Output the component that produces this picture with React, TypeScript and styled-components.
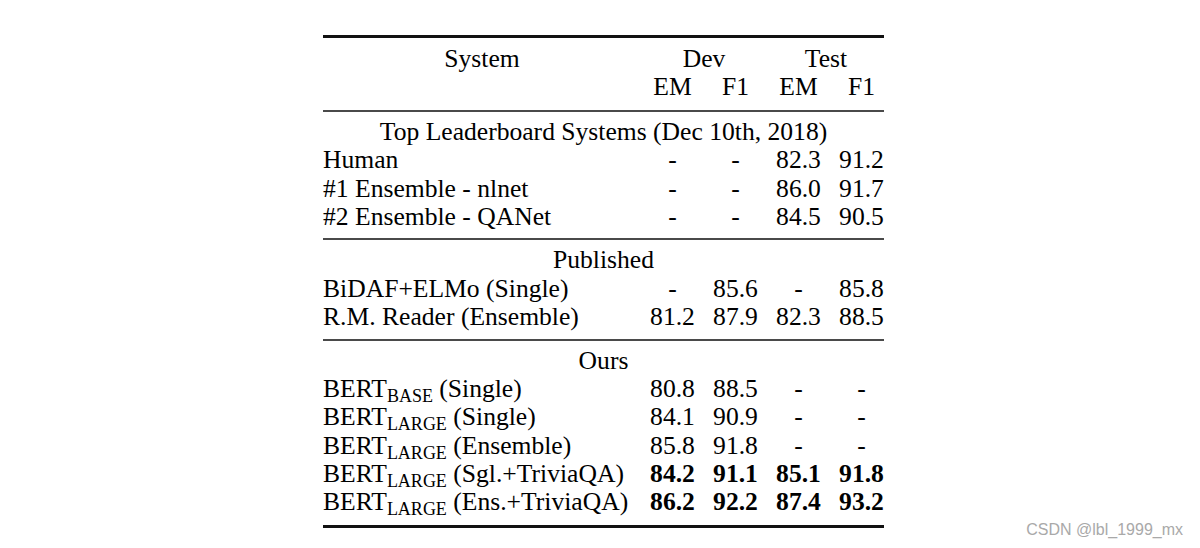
import React from "react";
import styled, { createGlobalStyle } from "styled-components";

const Global = createGlobalStyle`
  html, body { margin: 0; padding: 0; background: #fff; }
  body { width: 1200px; height: 548px; overflow: hidden; }
`;

const Page = styled.div`
  position: relative;
  width: 1200px;
  height: 548px;
  padding: 35px 0 0 323px;
  box-sizing: border-box;
  background: #fff;
  font-family: "Liberation Serif", "Times New Roman", serif;
  color: #000;
`;

const Table = styled.div`
  width: 561px;
  display: flex;
  flex-direction: column;
`;

const Rule = styled.div<{ $heavy?: boolean }>`
  height: ${(p) => (p.$heavy ? "3px" : "2px")};
  background: ${(p) => (p.$heavy ? "#111" : "#4a4a4a")};
`;

const Section = styled.div<{ $top?: number; $bottom?: number }>`
  padding: ${(p) => p.$top ?? 6}px 0 ${(p) => p.$bottom ?? 7}px;
  display: flex;
  flex-direction: column;
`;

const Row = styled.div`
  display: grid;
  grid-template-columns: 1fr repeat(4, 45px);
  column-gap: 18px;
  font-size: 25.6px;
  line-height: 28.4px;
  height: 28.4px;
  white-space: nowrap;
`;

const Label = styled.div<{ $center?: boolean }>`
  text-align: ${(p) => (p.$center ? "center" : "left")};
  padding-left: ${(p) => (p.$center ? "9px" : "0")};
`;

const Cell = styled.div<{ $bold?: boolean; $span?: number; $nudge?: number }>`
  font-weight: ${(p) => (p.$bold ? 700 : 400)};
  grid-column: span ${(p) => p.$span ?? 1};
  display: flex;
  justify-content: center;
  padding-right: ${(p) => p.$nudge ?? 0}px;
  overflow: visible;
`;

const Title = styled.div`
  grid-column: 1 / -1;
  text-align: center;
`;

const Sub = styled.span`
  font-size: 18px;
  text-transform: uppercase;
  vertical-align: -5px;
  line-height: 0;
`;

const Mark = styled.div`
  position: absolute;
  right: 17px;
  bottom: 9px;
  font-family: "Liberation Sans", Arial, sans-serif;
  font-size: 16px;
  color: #a9a9a9;
`;

type Data = { name: React.ReactNode; v: string[]; bold?: boolean };

const Bert = ({ sub, rest }: { sub: string; rest: string }) => (
  <>
    BERT<Sub>{sub}</Sub> {rest}
  </>
);

const leaderboard: Data[] = [
  { name: "Human", v: ["-", "-", "82.3", "91.2"] },
  { name: "#1 Ensemble - nlnet", v: ["-", "-", "86.0", "91.7"] },
  { name: "#2 Ensemble - QANet", v: ["-", "-", "84.5", "90.5"] },
];

const published: Data[] = [
  { name: "BiDAF+ELMo (Single)", v: ["-", "85.6", "-", "85.8"] },
  { name: "R.M. Reader (Ensemble)", v: ["81.2", "87.9", "82.3", "88.5"] },
];

const ours: Data[] = [
  { name: <Bert sub="base" rest="(Single)" />, v: ["80.8", "88.5", "-", "-"] },
  { name: <Bert sub="large" rest="(Single)" />, v: ["84.1", "90.9", "-", "-"] },
  { name: <Bert sub="large" rest="(Ensemble)" />, v: ["85.8", "91.8", "-", "-"] },
  { name: <Bert sub="large" rest="(Sgl.+TriviaQA)" />, v: ["84.2", "91.1", "85.1", "91.8"], bold: true },
  { name: <Bert sub="large" rest="(Ens.+TriviaQA)" />, v: ["86.2", "92.2", "87.4", "93.2"], bold: true },
];

const DataRows = ({ rows }: { rows: Data[] }) => (
  <>
    {rows.map((r, i) => (
      <Row key={i}>
        <Label>{r.name}</Label>
        {r.v.map((x, j) => (
          <Cell key={j} $bold={r.bold}>
            {x}
          </Cell>
        ))}
      </Row>
    ))}
  </>
);

export default function App() {
  return (
    <>
      <Global />
      <Page>
        <Table>
          <Rule $heavy />
          <Section $top={7} $bottom={8}>
            <Row>
              <Label $center>System</Label>
              <Cell $span={2}>Dev</Cell>
              <Cell $span={2} $nudge={8}>Test</Cell>
            </Row>
            <Row>
              <Label />
              <Cell>EM</Cell>
              <Cell>F1</Cell>
              <Cell>EM</Cell>
              <Cell>F1</Cell>
            </Row>
          </Section>
          <Rule />
          <Section>
            <Row>
              <Title>Top Leaderboard Systems (Dec 10th, 2018)</Title>
            </Row>
            <DataRows rows={leaderboard} />
          </Section>
          <Rule />
          <Section>
            <Row>
              <Title>Published</Title>
            </Row>
            <DataRows rows={published} />
          </Section>
          <Rule />
          <Section $bottom={8}>
            <Row>
              <Title>Ours</Title>
            </Row>
            <DataRows rows={ours} />
          </Section>
          <Rule $heavy />
        </Table>
        <Mark>CSDN @lbl_1999_mx</Mark>
      </Page>
    </>
  );
}
